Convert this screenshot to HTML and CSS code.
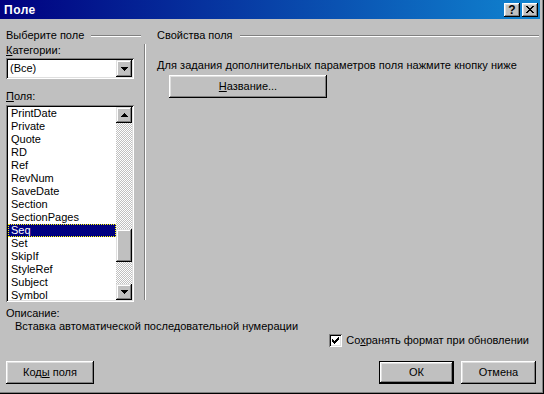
FILE: index.html
```html
<!DOCTYPE html>
<html lang="ru">
<head>
    <meta charset="UTF-8">
    <meta name="viewport" content="width=device-width, initial-scale=1.0">
    <title>Поле</title>
    <link rel="stylesheet" href="styles.css">
</head>
<body>

<div class="window">
    <div class="titlebar">
        <span class="title">Поле</span>
        <div class="caption-buttons">
            <div class="cap-btn help">?</div>
            <div class="cap-btn close">
                <svg width="8" height="7" viewBox="0 0 8 7"><path d="M0 0h2v1H0zM6 0h2v1H6zM1 1h2v1H1zM5 1h2v1H5zM2 2h4v1H2zM3 3h2v1H3zM2 4h4v1H2zM1 5h2v1H1zM5 5h2v1H5zM0 6h2v1H0zM6 6h2v1H6z" fill="#000"/></svg>
            </div>
        </div>
    </div>

    <div class="content">
        <div class="groups">
            <!-- Field selection -->
            <div class="left-group">
                <div class="group-head">
                    <span>Выберите поле</span>
                    <div class="etch"></div>
                </div>
                <div class="label"><u>К</u>атегории:</div>
                <div class="combo">
                    <div class="combo-value">(Все)</div>
                    <div class="sb-btn">
                        <svg width="7" height="4" viewBox="0 0 7 4"><path d="M0 0h7v1H0zM1 1h5v1H1zM2 2h3v1H2zM3 3h1v1H3z" fill="#000"/></svg>
                    </div>
                </div>
                <div class="label fields-label"><u>П</u>оля:</div>
                <div class="listbox">
                    <ul class="items">
                        <li>PrintDate</li>
                        <li>Private</li>
                        <li>Quote</li>
                        <li>RD</li>
                        <li>Ref</li>
                        <li>RevNum</li>
                        <li>SaveDate</li>
                        <li>Section</li>
                        <li>SectionPages</li>
                        <li class="selected">Seq</li>
                        <li>Set</li>
                        <li>SkipIf</li>
                        <li>StyleRef</li>
                        <li>Subject</li>
                        <li>Symbol</li>
                    </ul>
                    <div class="scrollbar">
                        <div class="sb-btn">
                            <svg width="7" height="4" viewBox="0 0 7 4"><path d="M3 0h1v1H3zM2 1h3v1H2zM1 2h5v1H1zM0 3h7v1H0z" fill="#000"/></svg>
                        </div>
                        <div class="track"><div class="thumb"></div></div>
                        <div class="sb-btn">
                            <svg width="7" height="4" viewBox="0 0 7 4"><path d="M0 0h7v1H0zM1 1h5v1H1zM2 2h3v1H2zM3 3h1v1H3z" fill="#000"/></svg>
                        </div>
                    </div>
                </div>
            </div>

            <!-- Field properties -->
            <div class="right-group">
                <div class="group-head right-head">
                    <span>Свойства поля</span>
                    <div class="etch"></div>
                </div>
                <div class="props">
                    <div class="hint">Для задания дополнительных параметров поля нажмите кнопку ниже</div>
                    <div class="btn name-btn"><span><u>Н</u>азвание...</span></div>
                </div>
            </div>
        </div>

        <div class="description">
            <div>Описание:</div>
            <div class="desc-text">Вставка автоматической последовательной нумерации</div>
        </div>

        <div class="check-row">
            <span class="checkbox">
                <svg width="7" height="7" viewBox="0 0 7 7"><path d="M6 0h1v1H6zM5 1h2v1H5zM0 2h1v1H0zM4 2h3v1H4zM0 3h2v1H0zM3 3h3v1H3zM0 4h5v1H0zM1 5h3v1H1zM2 6h1v1H2z" fill="#000"/></svg>
            </span>
            <span>Со<u>х</u>ранять формат при обновлении</span>
        </div>

        <div class="button-row">
            <div class="btn codes-btn"><span>Код<u>ы</u> поля</span></div>
            <div class="spacer"></div>
            <div class="btn default"><span>ОК</span></div>
            <div class="btn"><span>Отмена</span></div>
        </div>
    </div>
</div>

</body>
</html>
```

FILE: styles.css
```css
/* Base */
body {
    margin: 0;
    background: #c0c0c0;
    font-family: "Liberation Sans", Arial, sans-serif;
    font-size: 11px;
    line-height: 13px;
    color: #000;
}

u {
    text-decoration: underline;
    text-underline-offset: 1px;
}

/* Window frame */
.window {
    width: 544px;
    height: 394px;
    box-sizing: border-box;
    padding-right: 4px;
    background: #c0c0c0;
    box-shadow: inset -1px -1px #000, inset -2px -2px #808080;
    display: flex;
    flex-direction: column;
}

/* Title bar */
.titlebar {
    height: 19px;
    box-sizing: border-box;
    padding: 3px 2px 0 4px;
    display: flex;
    justify-content: space-between;
    align-items: flex-start;
    background: linear-gradient(to right, #000080, #1084d0);
}

.title {
    color: #fff;
    font-weight: bold;
    font-size: 12px;
    line-height: 14px;
    letter-spacing: 0.5px;
}

.caption-buttons {
    display: flex;
    gap: 2px;
}

.cap-btn {
    width: 16px;
    height: 14px;
    background: #c0c0c0;
    box-shadow: inset -1px -1px #000, inset 1px 1px #fff, inset -2px -2px #808080, inset 2px 2px #dfdfdf;
    display: flex;
    align-items: center;
    justify-content: center;
}

.cap-btn.help {
    font-weight: bold;
    font-size: 12px;
    line-height: 14px;
}

.cap-btn svg {
    margin: 0 1px 1px 0;
}

/* Content */
.content {
    flex: 1;
    padding: 10px 0 0 6px;
    display: flex;
    flex-direction: column;
}

.groups {
    display: flex;
    height: 273px;
}

.group-head {
    height: 13px;
    display: flex;
    align-items: center;
    gap: 7px;
    white-space: nowrap;
}

.etch {
    flex: 1;
    height: 0;
    border-top: 1px solid #808080;
    border-bottom: 1px solid #fff;
}

/* Left group */
.left-group {
    width: 135px;
    display: flex;
    flex-direction: column;
}

.label {
    margin-top: 2px;
    height: 13px;
}

.fields-label {
    margin-top: 11px;
}

.combo {
    margin-top: 1px;
    width: 128px;
    height: 21px;
    box-sizing: border-box;
    padding: 2px;
    background: #fff;
    box-shadow: inset 1px 1px #808080, inset -1px -1px #fff, inset 2px 2px #000, inset -2px -2px #dfdfdf;
    display: flex;
}

.combo-value {
    flex: 1;
    padding-left: 2px;
    line-height: 17px;
}

.combo .sb-btn {
    height: 17px;
}

.sb-btn {
    width: 16px;
    height: 16px;
    background: #c0c0c0;
    box-shadow: inset -1px -1px #000, inset 1px 1px #dfdfdf, inset -2px -2px #808080, inset 2px 2px #fff;
    display: flex;
    align-items: center;
    justify-content: center;
}

.listbox {
    margin-top: 2px;
    width: 128px;
    height: 197px;
    box-sizing: border-box;
    padding: 2px;
    background: #fff;
    box-shadow: inset 1px 1px #808080, inset -1px -1px #fff, inset 2px 2px #000, inset -2px -2px #dfdfdf;
    display: flex;
}

.items {
    flex: 1;
    list-style: none;
    margin: 0;
    padding: 0;
    overflow: hidden;
}

.items li {
    height: 13px;
    padding-left: 3px;
    white-space: nowrap;
}

.items li.selected {
    background: #000080;
    color: #fff;
    outline: 1px dotted #ffff00;
    outline-offset: -1px;
}

.scrollbar {
    width: 16px;
    display: flex;
    flex-direction: column;
}

.track {
    flex: 1;
    background-image: conic-gradient(#fff 25%, #c0c0c0 0 50%, #fff 0 75%, #c0c0c0 0);
    background-size: 2px 2px;
}

.thumb {
    margin-top: 106px;
    height: 33px;
    background: #c0c0c0;
    box-shadow: inset -1px -1px #000, inset 1px 1px #dfdfdf, inset -2px -2px #808080, inset 2px 2px #fff;
}

/* Right group */
.right-group {
    flex: 1;
    margin-left: 3px;
    display: flex;
    flex-direction: column;
}

.right-head {
    padding-left: 13px;
    margin-right: 1px;
}

.props {
    flex: 1;
    margin: 2px 0 2px 0;
    padding: 15px 0 0 12px;
    border-left: 1px solid #808080;
    box-shadow: inset 1px 0 #fff;
}

.hint {
    height: 13px;
    white-space: nowrap;
    letter-spacing: 0.05px;
}

/* Buttons */
.btn {
    height: 23px;
    box-sizing: border-box;
    background: #c0c0c0;
    box-shadow: inset -1px -1px #000, inset 1px 1px #fff, inset -2px -2px #808080, inset 2px 2px #dfdfdf;
    display: flex;
    align-items: center;
    justify-content: center;
    width: 75px;
    white-space: nowrap;
}

.name-btn {
    margin: 3px 0 0 12px;
    width: 158px;
}

.btn.default {
    border: 1px solid #000;
}

/* Description */
.description {
    margin-top: 5px;
}

.description div {
    height: 13px;
}

.desc-text {
    padding-left: 9px;
}

.check-row {
    margin-top: 1px;
    height: 13px;
    padding-right: 11px;
    display: flex;
    justify-content: flex-end;
    align-items: center;
    gap: 4px;
}

.checkbox {
    width: 13px;
    height: 13px;
    box-sizing: border-box;
    background: #fff;
    box-shadow: inset 1px 1px #808080, inset -1px -1px #fff, inset 2px 2px #000, inset -2px -2px #dfdfdf;
    display: flex;
    align-items: center;
    justify-content: center;
}

.button-row {
    margin-top: 14px;
    padding-right: 4px;
    display: flex;
    gap: 7px;
}

.codes-btn {
    width: 88px;
}

.spacer {
    flex: 1;
}
```
